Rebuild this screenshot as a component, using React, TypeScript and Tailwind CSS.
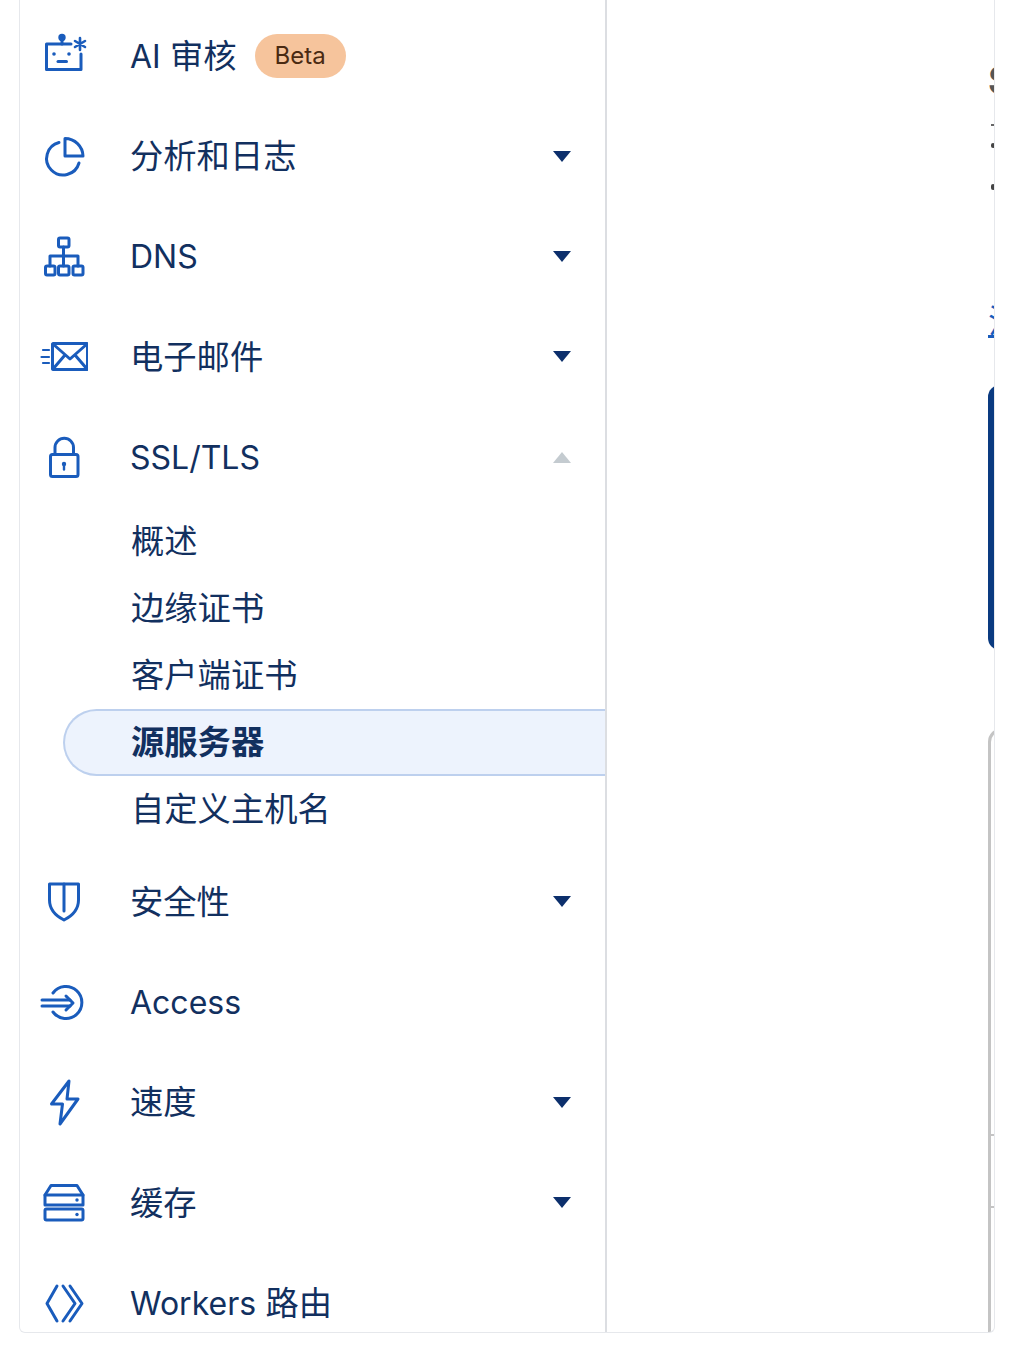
import React from "react";

const font = { fontFamily: '"Inter", "Noto Sans CJK SC", sans-serif' };

function Icon({ children }: { children: React.ReactNode }) {
  return (
    <svg width="48" height="48" viewBox="0 0 48 48" fill="none" stroke="#1a5cbc" strokeWidth="3" strokeLinejoin="round" strokeLinecap="round" className="shrink-0">
      {children}
    </svg>
  );
}

const AiIcon = () => (
  <Icon>
    <path d="M31 12H6.5V37.5H41V22" />
    <path d="M22 12V7" />
    <circle cx="22" cy="5.5" r="2.2" fill="#1a5cbc" />
    <circle cx="14" cy="22" r="1.8" fill="#1a5cbc" stroke="none" />
    <circle cx="29" cy="22" r="1.8" fill="#1a5cbc" stroke="none" />
    <path d="M18 29.5H26.5" />
    <path d="M40 6V18M35 9L45 15M45 9L35 15" strokeWidth="2.6" />
  </Icon>
);
const PieIcon = () => (
  <Icon>
    <path d="M19 9.5A16.5 16.5 0 1 0 39 30" />
    <path d="M25 5.5A18 18 0 0 1 43 23H25Z" />
  </Icon>
);
const DnsIcon = () => (
  <Icon>
    <rect x="18.5" y="5" width="10.5" height="9" rx="1.5" />
    <path d="M23.5 14V33M10 33V23H38V33" />
    <rect x="5.5" y="33" width="9.5" height="9" rx="1.5" />
    <rect x="18.5" y="33" width="10.5" height="9" rx="1.5" />
    <rect x="33" y="33" width="10" height="9" rx="1.5" />
  </Icon>
);
const MailIcon = () => (
  <Icon>
    <rect x="12.5" y="10.5" width="35" height="26" rx="1" />
    <path d="M13 11L30 26L47 11M13 36L25 22M47 36L35 22" />
    <path d="M3 17H9M1.5 24H9M3 30H9" strokeWidth="2.2" />
  </Icon>
);
const LockIcon = () => (
  <Icon>
    <rect x="10.5" y="20.5" width="27.5" height="22" rx="2" />
    <path d="M15 20V13.5A9.2 9.2 0 0 1 33.5 13.5V20" />
    <circle cx="24" cy="30" r="2.2" fill="#1a5cbc" stroke="none" />
    <path d="M24 30.5V35.5" strokeWidth="2.4" />
  </Icon>
);
const ShieldIcon = () => (
  <Icon>
    <path d="M9.5 6H38.5V22C38.5 31 32 38 24 42C16 38 9.5 31 9.5 22Z" />
    <path d="M24 6V33" />
  </Icon>
);
const AccessIcon = () => (
  <Icon>
    <path d="M13 14A16 16 0 1 1 13 33" />
    <path d="M2 21H30M2 27H30" />
    <path d="M26 17L33 24L26 31" />
  </Icon>
);
const BoltIcon = () => (
  <Icon>
    <path d="M29 2L11.5 25H22.5L20 45L38 20H27Z" />
  </Icon>
);
const CacheIcon = () => (
  <Icon>
    <path d="M5 16L11 6.5H37L43 16V26H5Z" />
    <path d="M5 16H43" />
    <rect x="5" y="30" width="38" height="11" rx="1.5" />
    <circle cx="37" cy="21" r="1.7" fill="#1a5cbc" stroke="none" />
    <circle cx="37" cy="35.5" r="1.7" fill="#1a5cbc" stroke="none" />
  </Icon>
);
const WorkersIcon = () => (
  <Icon>
    <path d="M17 6L7 23.5L17 41" />
    <path d="M23 6L35 23.5L23 41" />
    <path d="M30 6L42 23.5L30 41" />
  </Icon>
);

function Caret({ up }: { up?: boolean }) {
  return (
    <svg width="20" height="12" viewBox="0 0 20 12" className={up ? "ml-auto mb-[2px] mr-[33px] shrink-0" : "ml-auto mr-[33px] shrink-0"}>
      {up ? <path d="M1 12H19L10 1Z" fill="#c4cbd0" /> : <path d="M1 0H19L10 11Z" fill="#0c2f6c" />}
    </svg>
  );
}

const Latin = ({ children }: { children: React.ReactNode }) => <span className="text-[32px]">{children}</span>;

function Row({ icon, label, caret, up, badge }: { icon: React.ReactNode; label: React.ReactNode; caret?: boolean; up?: boolean; badge?: boolean }) {
  return (
    <div className="flex h-[100.4px] items-center pl-[20px]">
      {icon}
      <span className="ml-[42px] text-[33.3px] leading-none text-[#12305f] whitespace-nowrap">{label}</span>
      {badge && (
        <span className="ml-[18px] flex h-[44px] w-[91px] items-center justify-center rounded-full bg-[#f6c49c] text-[24px] text-[#4a2a12]">Beta</span>
      )}
      {caret && <Caret up={up} />}
    </div>
  );
}

function Sub({ label, active }: { label: string; active?: boolean }) {
  if (active) {
    return (
      <div className="ml-[43px] flex h-[67px] items-center rounded-l-full border-y-2 border-l-2 border-[#bdd0ee] bg-[#edf3fd] pl-[66px] text-[33.3px] font-bold leading-none text-[#12305f]">
        {label}
      </div>
    );
  }
  return <div className="flex h-[67px] items-center pl-[111px] text-[33.3px] leading-none text-[#12305f]">{label}</div>;
}

export default function App() {
  return (
    <div className="h-[1357px] w-[1015px] overflow-hidden bg-white" style={font}>
      <div className="ml-[19px] flex h-[1333px] w-[976px] overflow-hidden rounded-b-[6px] border-x border-b border-[#e6e8ec] bg-white">
        <aside className="h-full w-[587px] shrink-0 overflow-hidden border-r-2 border-[#dcdee2] pt-[6px]">
          <Row icon={<AiIcon />} label={<><Latin>AI</Latin> 审核</>} badge />
          <Row icon={<PieIcon />} label="分析和日志" caret />
          <Row icon={<DnsIcon />} label={<Latin>DNS</Latin>} caret />
          <Row icon={<MailIcon />} label="电子邮件" caret />
          <Row icon={<LockIcon />} label={<Latin>SSL/TLS</Latin>} caret up />
          <Sub label="概述" />
          <Sub label="边缘证书" />
          <Sub label="客户端证书" />
          <Sub label="源服务器" active />
          <Sub label="自定义主机名" />
          <div className="h-[9px]" />
          <Row icon={<ShieldIcon />} label="安全性" caret />
          <Row icon={<AccessIcon />} label={<Latin>Access</Latin>} />
          <Row icon={<BoltIcon />} label="速度" caret />
          <Row icon={<CacheIcon />} label="缓存" caret />
          <Row icon={<WorkersIcon />} label={<><Latin>Workers</Latin> 路由</>} />
        </aside>
        <main className="flex-1 overflow-hidden pl-[381px]">
          <div className="w-[300px]">
            <div className="mt-[58px] text-[38px] font-bold leading-[44px] text-[#555]">SSL</div>
            <div className="mt-[22px] flex flex-col">
              <div className="ml-[3px] h-[2px] w-[3px] bg-[#666]" />
              <div className="ml-[3px] mt-[17px] h-[5px] w-[4px] rounded-full bg-[#444]" />
              <div className="ml-[3px] mt-[36px] h-[6px] w-[4px] rounded-full bg-[#444]" />
            </div>
            <div className="mt-[112px] text-[33px] leading-[38px] text-[#1a5cbc] underline">注</div>
            <div className="mt-[45px] h-[265px] rounded-l-[12px] bg-[#0a3a80]" />
            <div className="mt-[78px] h-[700px] rounded-tl-[14px] border-l-[3px] border-t-[3px] border-[#c4c4c4]">
              <div className="h-[405px] border-b-2 border-[#c4c4c4]" />
              <div className="h-[72px] border-b-2 border-[#c4c4c4]" />
            </div>
          </div>
        </main>
      </div>
    </div>
  );
}
